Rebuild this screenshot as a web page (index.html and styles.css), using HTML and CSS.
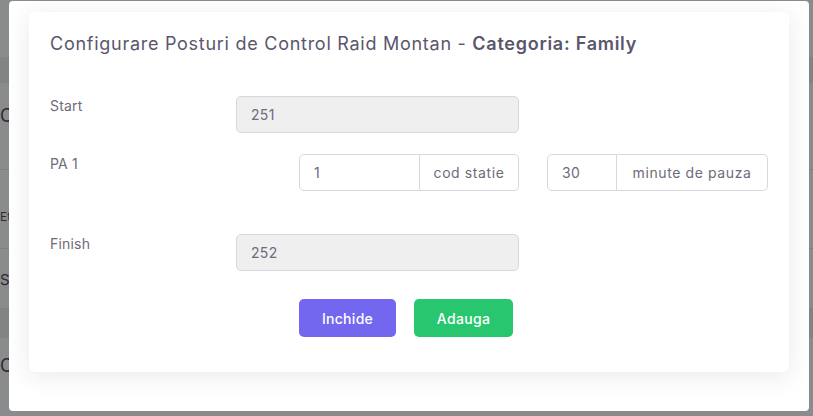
FILE: index.html
```html
<!DOCTYPE html>
<html lang="ro">
<head>
<meta charset="utf-8">
<title>Configurare Posturi de Control</title>
<link rel="stylesheet" href="styles.css">
</head>
<body>
<div class="page">
  <div class="pg-top"></div>
  <div class="pg-band"></div>
  <div class="pg-row pg-h1">C</div>
  <div class="pg-row pg-line">Et</div>
  <div class="pg-row pg-line pg-s">S</div>
  <div class="pg-band2"></div>
  <div class="pg-row pg-h2">C</div>
</div>

<div class="overlay">
  <div class="modal">
    <div class="card">
      <h4 class="title">Configurare Posturi de Control Raid Montan - <strong>Categoria: Family</strong></h4>

      <div class="form">
        <div class="row">
          <label class="lbl">Start</label>
          <div class="field main"><input class="ctl disabled" value="251" disabled></div>
        </div>

        <div class="row row-pa">
          <label class="lbl">PA 1</label>
          <div class="group g1">
            <input class="ctl in" value="1">
            <span class="addon">cod statie</span>
          </div>
          <div class="group g2">
            <input class="ctl in" value="30">
            <span class="addon">minute de pauza</span>
          </div>
        </div>

        <div class="row">
          <label class="lbl">Finish</label>
          <div class="field main"><input class="ctl disabled" value="252" disabled></div>
        </div>
      </div>

      <div class="actions">
        <button class="btn btn-primary">Inchide</button>
        <button class="btn btn-success">Adauga</button>
      </div>
    </div>
  </div>
</div>
</body>
</html>
```

FILE: styles.css
```css
* { box-sizing: border-box; }
html, body { margin: 0; padding: 0; }
body {
  width: 813px;
  height: 416px;
  overflow: hidden;
  background: #898b8d;
  font-family: Inter, "Noto Sans", "DejaVu Sans", sans-serif;
  position: relative;
}

/* underlying page (seen through the backdrop) */
.page { width: 813px; }
.pg-top { height: 57px; }
.pg-band { height: 26px; background: #818385; }
.pg-row {
  color: #2c2a33;
  white-space: nowrap;
  line-height: 1.2;
}
.pg-h1 { height: 87px; padding-top: 22px; font-size: 18px; border-bottom: 1px solid #7e8082; }
.pg-line { height: 79px; padding-top: 40px; font-size: 12px; border-bottom: 1px solid #7e8082; }
.pg-s { height: 59px; padding-top: 22px; font-size: 15px; border-bottom: 0; }
.pg-band2 { height: 30px; background: #818385; }
.pg-h2 { height: 60px; padding-top: 17px; font-size: 18px; }

/* modal */
.overlay {
  position: absolute;
  inset: 0;
}
.modal {
  position: absolute;
  left: 9px;
  top: 1px;
  width: 800px;
  height: 410px;
  background: #fff;
  border-radius: 4px;
  padding: 11px 20px 0;
}
.card {
  background: #fff;
  border-radius: 6px;
  box-shadow: 0 4px 24px 0 rgba(34, 41, 47, 0.1);
  padding: 21px 21px 35px;
  height: 360px;
}
.title {
  margin: 0;
  font-size: 18px;
  line-height: 22px;
  font-weight: 400;
  color: #5a566d;
  letter-spacing: 0.73px;
}
.title strong { font-weight: 600; }

.form { margin-top: 41px; }
.row {
  display: grid;
  grid-template-columns: 186px 283px 28px 221px;
  height: 37px;
  margin-bottom: 21px;
}
.row-pa { margin-bottom: 43px; }
.lbl {
  grid-column: 1;
  font-size: 14px;
  line-height: 20px;
  color: #6e6b7b;
  letter-spacing: 0.2px;
}
.field.main { grid-column: 2; }
.ctl {
  font-family: inherit;
  font-size: 14px;
  color: #6e6b7b;
  height: 37px;
  width: 100%;
  border: 1px solid #d8d6de;
  border-radius: 5px;
  padding: 0 14px;
  background: #fff;
  outline: none;
  letter-spacing: 0.3px;
}
.ctl.disabled { background: #efefef; }

.group {
  display: flex;
  height: 37px;
}
.g1 { grid-column: 2; justify-self: end; width: 220px; }
.g2 { grid-column: 4; width: 221px; }
.group .in {
  border-radius: 5px 0 0 5px;
  flex: 1 1 auto;
  min-width: 0;
}
.addon {
  display: flex;
  align-items: center;
  justify-content: center;
  border: 1px solid #d8d6de;
  border-left: 0;
  border-radius: 0 5px 5px 0;
  padding: 0 10px;
  font-size: 14px;
  color: #6e6b7b;
  white-space: nowrap;
  letter-spacing: 0.6px;
}
.g1 .in { width: 121px; flex: 0 0 121px; }
.g1 .addon { flex: 1; }
.g2 .in { width: 70px; flex: 0 0 70px; }
.g2 .addon { flex: 1; }

.actions {
  display: flex;
  justify-content: center;
  gap: 18px;
  margin-top: 28px;
  padding-right: 6px;
}
.btn {
  font-family: inherit;
  font-size: 14px;
  font-weight: 500;
  color: #fff;
  border: 0;
  border-radius: 5px;
  height: 38px;
  padding: 0 10px;
  letter-spacing: 0.3px;
}
.btn-primary { background: #7367f0; width: 97px; }
.btn-success { background: #28c76f; width: 99px; }
```
